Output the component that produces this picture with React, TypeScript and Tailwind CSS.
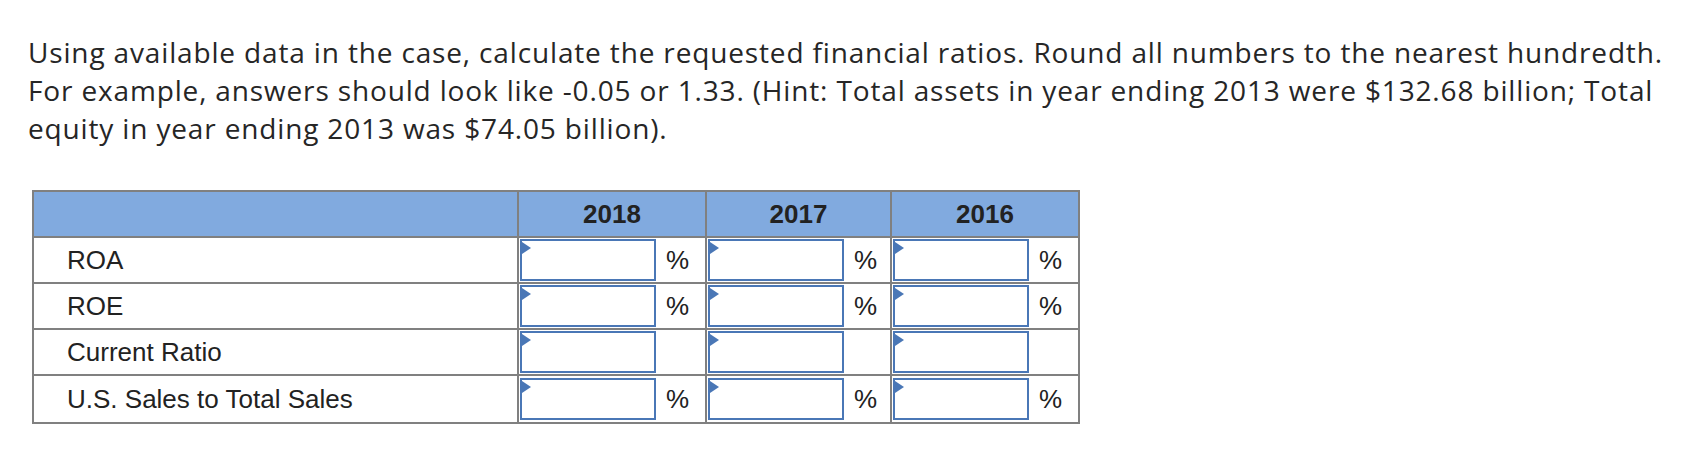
import React from "react";

const rows = [
  { label: "ROA", pct: true },
  { label: "ROE", pct: true },
  { label: "Current Ratio", pct: false },
  { label: "U.S. Sales to Total Sales", pct: true },
];

const years = [
  { y: "2018", w: "w-[188px]", border: true },
  { y: "2017", w: "w-[185px]", border: true },
  { y: "2016", w: "w-[186px]", border: false },
];

function InputBox() {
  return (
    <div className="relative ml-[1px] h-[42px] w-[136px] border-2 border-[#4a77b6] bg-white">
      <div className="absolute left-0 top-[1px] h-0 w-0 border-y-[6px] border-l-[9px] border-y-transparent border-l-[#4a77b6]" />
    </div>
  );
}

export default function App() {
  return (
    <div className="h-[462px] w-[1706px] bg-white pl-[28px] pt-[33px]">
      <p
        className="whitespace-nowrap text-[28px] leading-[38px] tracking-[0.85px] text-[#262626]"
        style={{ fontFamily: "'Open Sans', Lato, sans-serif" }}
      >
        Using available data in the case, calculate the requested financial ratios. Round all numbers to the nearest hundredth.
        <br />
        For example, answers should look like -0.05 or 1.33. (Hint: Total assets in year ending 2013 were $132.68 billion; Total
        <br />
        equity in year ending 2013 was $74.05 billion).
      </p>
      <div
        className="ml-[4px] mt-[43px] w-[1048px] border-2 border-[#808080] text-[26px] text-[#222]"
        style={{ fontFamily: "'Liberation Sans', Arial, sans-serif" }}
      >
        <div className="flex h-[46px] border-b-2 border-[#808080] bg-[#81aadf]">
          <div className="w-[485px] border-r-2 border-[#808080]" />
          {years.map((c) => (
            <div
              key={c.y}
              className={`${c.w} flex items-center justify-center font-bold ${c.border ? "border-r-2 border-[#808080]" : ""}`}
            >
              {c.y}
            </div>
          ))}
        </div>
        {rows.map((r, i) => (
          <div
            key={r.label}
            className={`flex h-[46px] bg-white ${i < rows.length - 1 ? "border-b-2 border-[#808080]" : "h-[44px]"}`}
          >
            <div className="flex w-[485px] items-center border-r-2 border-[#808080] pl-[33px]">{r.label}</div>
            {years.map((c) => (
              <div
                key={c.y}
                className={`${c.w} flex items-center ${c.border ? "border-r-2 border-[#808080]" : ""}`}
              >
                <InputBox />
                <span className="pl-[10px]">{r.pct ? "%" : ""}</span>
              </div>
            ))}
          </div>
        ))}
      </div>
    </div>
  );
}
